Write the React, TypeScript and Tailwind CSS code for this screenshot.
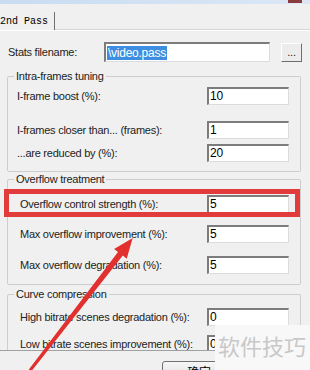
// Win7-style "2nd Pass" codec settings dialog, with red tutorial markup on top

const ui = "font-['Liberation_Sans',Arial,sans-serif] text-[11px] tracking-[-0.25px] text-[#222222]";

function ValueBox({ value }: { value: string }) {
  return (
    <div className="h-[18px] w-[82px] shrink-0 bg-white border-t-2 border-l-2 border-t-[#7c7c7c] border-l-[#7c7c7c] border-r border-b border-r-[#dcdcdc] border-b-[#dcdcdc] pl-[1px] text-[12px] leading-[15px] text-black">
      {value}
    </div>
  );
}

function Row({ label, value, className = '' }: { label: string; value: string; className?: string }) {
  return (
    <div className={`flex h-[18px] shrink-0 items-center justify-between ${className}`}>
      <span className="whitespace-nowrap">{label}</span>
      <ValueBox value={value} />
    </div>
  );
}

function Group({ title, className = '', children }: { title: string; className?: string; children: React.ReactNode }) {
  return (
    <fieldset className={`ml-[7px] w-[294px] shrink-0 border border-[#cdcdcd] rounded-[2px] p-0 ${className}`}>
      <legend className="ml-[6px] px-[2px] leading-[14px]">{title}</legend>
      {children}
    </fieldset>
  );
}

function RedArrow() {
  return (
    <svg className="absolute left-0 top-0 pointer-events-none" width="310" height="370" viewBox="0 0 310 370">
      <polygon
        fill="#e2302e"
        points="132.7,238 126.7,258.7 122.8,255.6 31.2,371.5 28.8,369.5 118,252 114.1,248.9"
      />
    </svg>
  );
}

export default function App() {
  return (
    <div className={`relative w-[310px] h-[370px] overflow-hidden bg-[#f0f0f0] ${ui}`}>
      {/* title bar edge */}
      <div className="flex h-[4px] justify-end bg-gradient-to-r from-[#c9dcf2] to-[#dbe7f5]">
        <span className="mr-[8px] h-[3px] w-[14px] bg-[#8a3b3b]" />
      </div>

      {/* tab strip */}
      <div className="flex h-[26px]">
        <div className="mt-[8px] flex h-[18px] w-[55px] items-center border-r border-[#6f6f6f] font-['Liberation_Mono',monospace] text-[10px] tracking-normal text-black">
          2nd Pass
        </div>
        <div className="flex-1 border-b border-[#d6d6d6]" />
      </div>

      {/* tab page */}
      <div className="flex h-[321px] flex-col overflow-hidden border-t border-white border-b border-b-[#a0a0a0]">
        <div className="mt-[11px] flex h-[20px] shrink-0 items-center pl-[8px]">
          <span className="w-[96px]">Stats filename:</span>
          <div className="flex h-[20px] w-[166px] items-center bg-white border-t-2 border-l-2 border-t-[#7c7c7c] border-l-[#7c7c7c] border-r border-b border-r-[#dcdcdc] border-b-[#dcdcdc] pl-[1px]">
            <span className="bg-[#3d8ee0] px-[1px] text-[12px] leading-[14px] text-white">\video.pass</span>
          </div>
          <div className="ml-[11px] flex h-[19px] w-[21px] items-center justify-center border border-t-white border-l-white border-r-[#6e6e6e] border-b-[#6e6e6e] bg-[#ececec] text-[11px] leading-none">
            ...
          </div>
        </div>

        <Group title="Intra-frames tuning" className="mt-[7px]">
          <div className="flex flex-col pl-[9px] pr-[11px] pt-[4px] pb-[9px]">
            <Row label="I-frame boost (%):" value="10" />
            <Row label="I-frames closer than... (frames):" value="1" className="mt-[16px]" />
            <Row label="...are reduced by (%):" value="20" className="mt-[5px]" />
          </div>
        </Group>

        <Group title="Overflow treatment">
          <div className="flex flex-col pl-[12px] pr-[11px] pt-[9px] pb-[10px]">
            <Row label="Overflow control strength (%):" value="5" />
            <Row label="Max overflow improvement (%):" value="5" className="mt-[12px]" />
            <Row label="Max overflow degradation (%):" value="5" className="mt-[13px]" />
          </div>
        </Group>

        <Group title="Curve compression" className="mt-[2px]">
          <div className="flex flex-col pl-[12px] pr-[11px] pt-[7px] pb-[8px]">
            <Row label="High bitrate scenes degradation (%):" value="0" />
            <Row label="Low bitrate scenes improvement (%):" value="0" className="mt-[9px]" />
          </div>
        </Group>
      </div>

      {/* dialog buttons */}
      <div className="pl-[162px] pt-[10px]">
        <div className="flex h-[22px] w-[74px] items-center justify-center rounded-[3px] border border-[#707070] bg-gradient-to-b from-[#f6f6f6] to-[#dddddd] font-['Noto_Sans_CJK_SC',sans-serif] text-[12px] text-black">
          确定
        </div>
      </div>

      {/* tutorial highlight */}
      <div className="absolute left-[4px] top-[189px] h-[28px] w-[296px] border-[5px] border-[#e23b3b]" />
      <RedArrow />

      {/* watermark */}
      <div className="absolute right-0 top-[325px] h-[45px] w-[95px] bg-[#f8f8f8] pl-[3px] pt-[7px] font-['Noto_Sans_CJK_SC',sans-serif] text-[22px] leading-[26px] tracking-normal text-[#c8c8c8]">
        软件技巧
      </div>
    </div>
  );
}
